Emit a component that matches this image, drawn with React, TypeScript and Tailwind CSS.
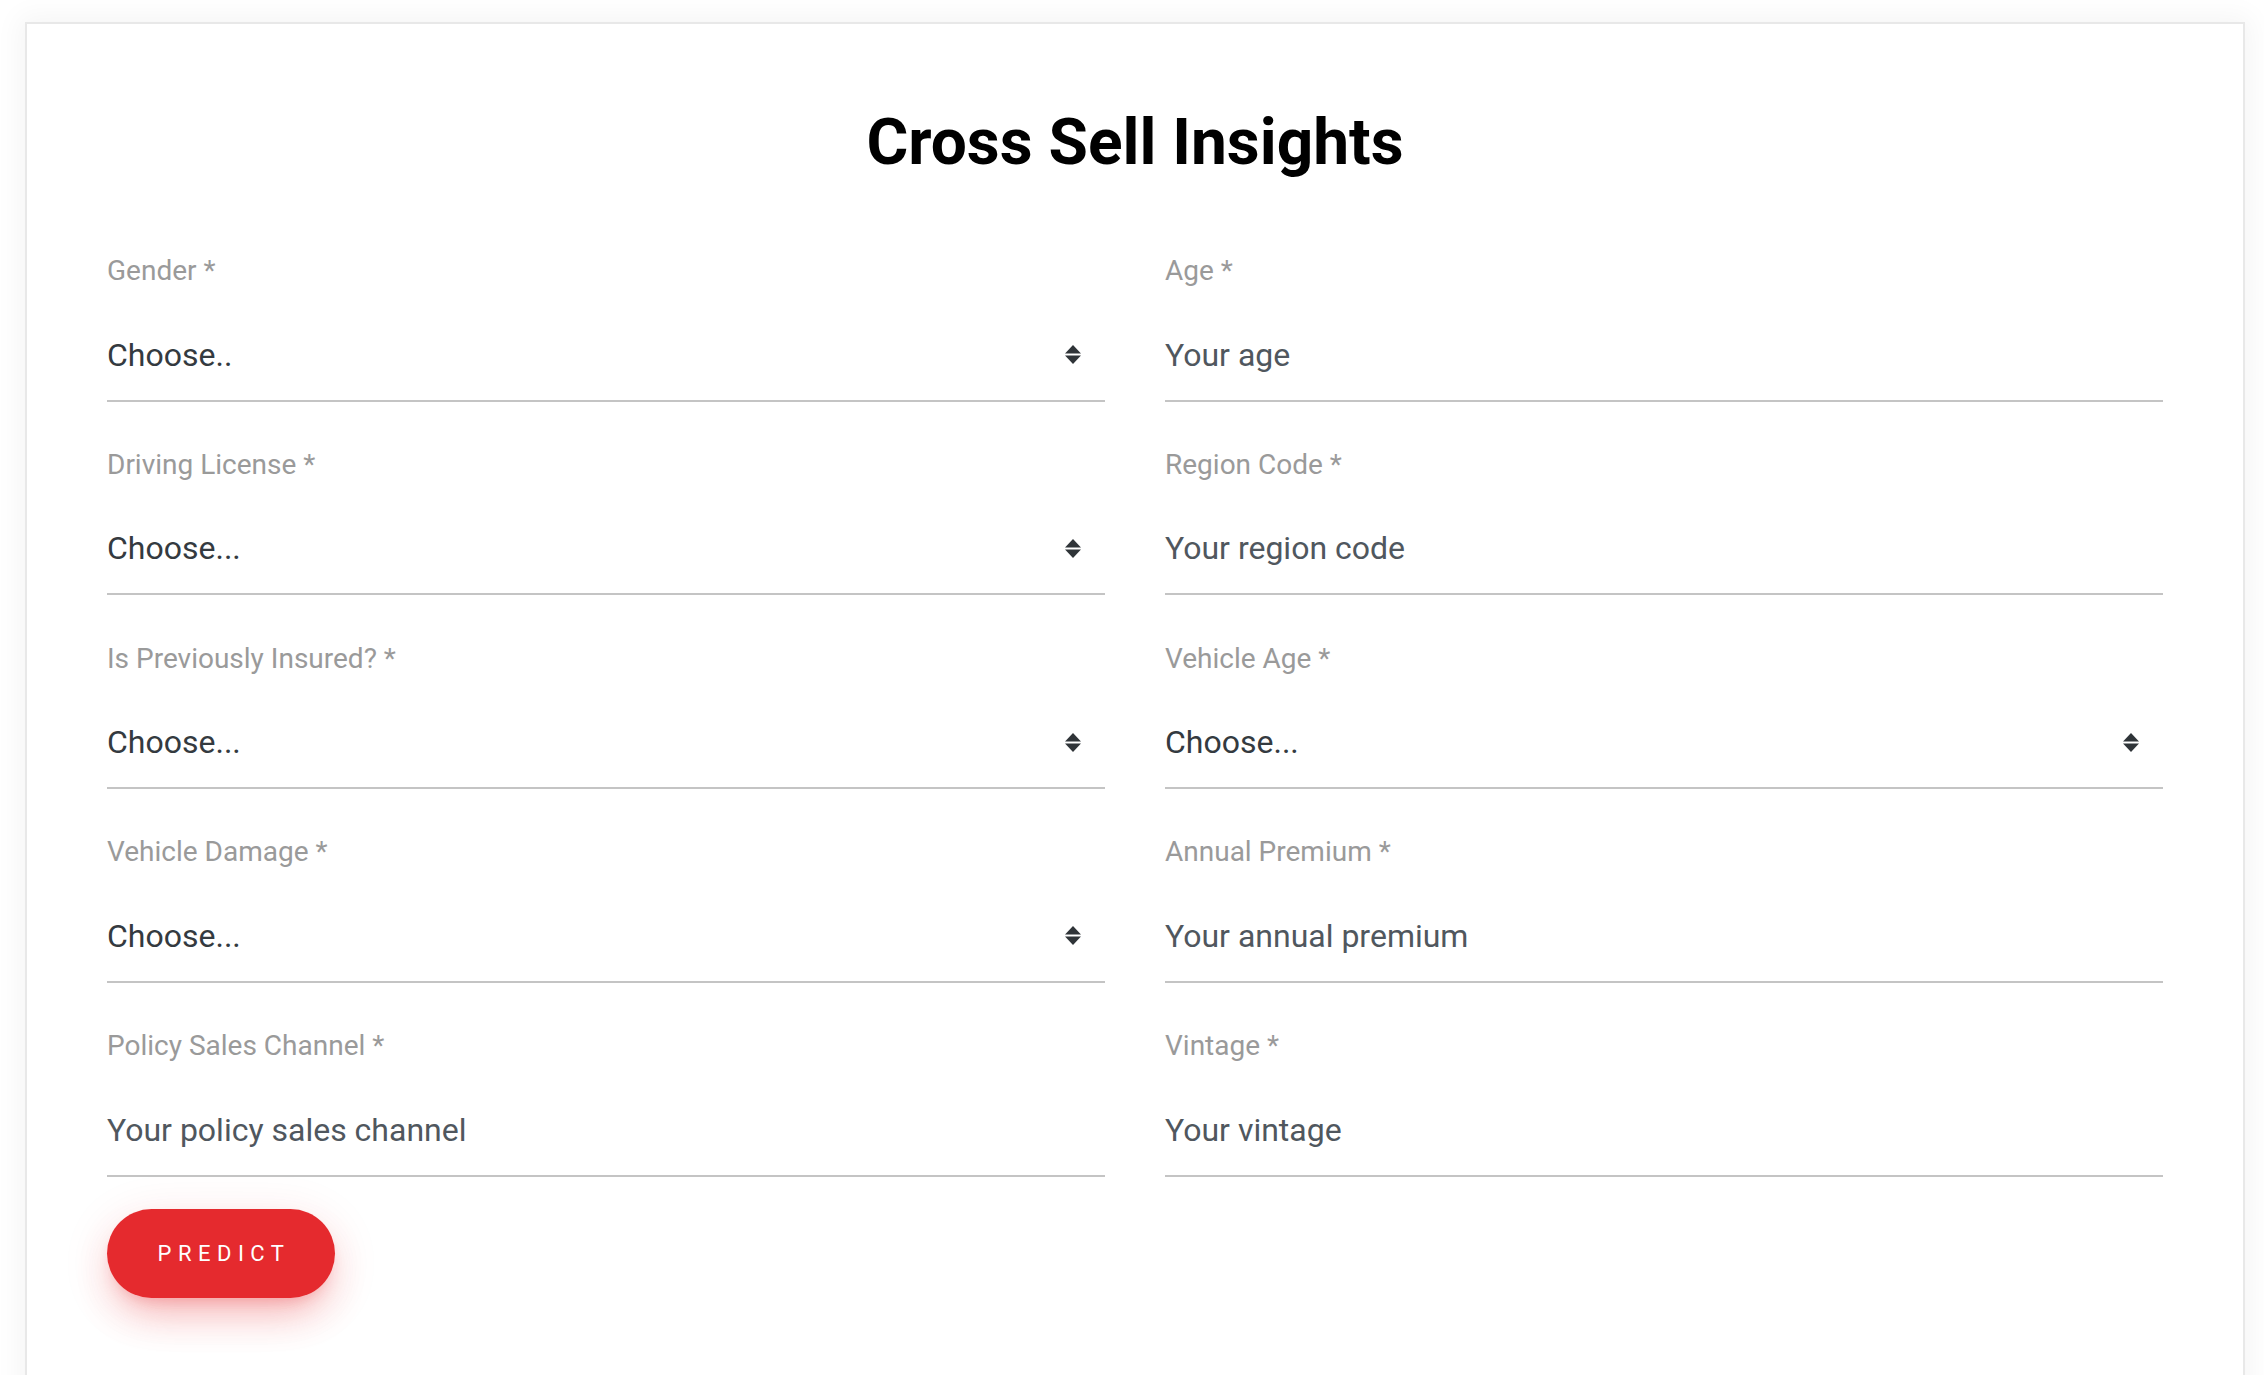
import React from "react";

type Field = { label: string; kind: "select" | "input"; text: string };

const fields: Field[] = [
  { label: "Gender *", kind: "select", text: "Choose.." },
  { label: "Age *", kind: "input", text: "Your age" },
  { label: "Driving License *", kind: "select", text: "Choose..." },
  { label: "Region Code *", kind: "input", text: "Your region code" },
  { label: "Is Previously Insured? *", kind: "select", text: "Choose..." },
  { label: "Vehicle Age *", kind: "select", text: "Choose..." },
  { label: "Vehicle Damage *", kind: "select", text: "Choose..." },
  { label: "Annual Premium *", kind: "input", text: "Your annual premium" },
  { label: "Policy Sales Channel *", kind: "input", text: "Your policy sales channel" },
  { label: "Vintage *", kind: "input", text: "Your vintage" },
];

function Arrows() {
  return (
    <svg width="16" height="19" viewBox="0 0 16 19" className="mr-[24px] shrink-0">
      <polygon points="8,0 16,8.6 0,8.6" fill="#2f3438" />
      <polygon points="0,10.4 16,10.4 8,19" fill="#2f3438" />
    </svg>
  );
}

function FormField({ f }: { f: Field }) {
  return (
    <div className="flex flex-col">
      <label className="text-[28px] leading-[39px] text-[#9a9a9a]">{f.label}</label>
      <div className="mt-[41.5px] flex items-center justify-between border-b-2 border-[#c4c4c4] pb-[22px]">
        <span
          className={
            "text-[32px] leading-[46px] " +
            (f.kind === "select" ? "text-[#343a40]" : "text-[#50575e]")
          }
        >
          {f.text}
        </span>
        {f.kind === "select" && <Arrows />}
      </div>
    </div>
  );
}

export default function App() {
  return (
    <div
      className="h-[1375px] overflow-hidden bg-white"
      style={{ fontFamily: "Roboto, 'Liberation Sans', sans-serif" }}
    >
      <div className="ml-[25px] mt-[22px] h-[1400px] w-[2220px] border-2 border-[#e8e8e8] bg-white px-[80px] pt-[81px] shadow-[0_0_26px_6px_rgba(0,0,0,0.045)]">
        <h1 className="text-center text-[64px] font-bold leading-[76px] text-black">
          Cross Sell Insights
        </h1>
        <div className="mt-[70px] grid grid-cols-2 gap-x-[60px] gap-y-[43.25px]">
          {fields.map((f) => (
            <FormField key={f.label} f={f} />
          ))}
        </div>
        <button className="mt-[32px] flex h-[89px] w-[228px] items-center justify-center rounded-full bg-[#e52a2e] text-[22px] font-normal tracking-[6.5px] text-white shadow-[0_22px_40px_-10px_rgba(229,42,46,0.32),0_10px_50px_0_rgba(229,42,46,0.12),0_8px_14px_-6px_rgba(229,42,46,0.2)]">
          <span className="pl-[6px]">PREDICT</span>
        </button>
      </div>
    </div>
  );
}
